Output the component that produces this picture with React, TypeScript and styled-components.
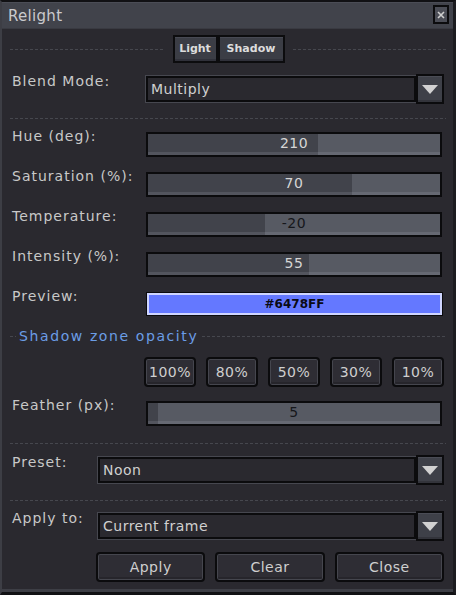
import React from 'react';
import styled, { createGlobalStyle } from 'styled-components';

const GlobalStyle = createGlobalStyle`
  html, body {
    margin: 0;
    padding: 0;
    background: #16161a;
  }
  body {
    font-family: "DejaVu Sans", "Liberation Sans", sans-serif;
  }
`;

const Window = styled.div`
  box-sizing: border-box;
  width: 456px;
  height: 595px;
  display: flex;
  flex-direction: column;
  background: #2a292f;
  border-top: 2px solid #111114;
  border-left: 2px solid #3d3e45;
  border-right: 3px solid #1c1c20;
  border-bottom: 3px solid #111114;
  box-shadow: inset 0 -3px #3d3e45;
  color: #c8c8c8;
  font-size: 14px;
  line-height: 16px;
`;

const TitleBar = styled.div`
  height: 27px;
  flex: none;
  display: flex;
  align-items: center;
  justify-content: space-between;
  padding: 0 4px 0 6px;
  background: #41434b;
  box-shadow: inset 0 1px #4b4d56, inset 0 -1px #393a41;
`;

const Title = styled.span`
  font-size: 15px;
  letter-spacing: 0.3px;
  color: #cacacd;
`;

const CloseButton = styled.div`
  box-sizing: border-box;
  width: 16px;
  height: 19px;
  margin-top: -2px;
  border: 2px solid #0c0c0e;
  background: #4b4d56;
  display: grid;
  place-items: center;
`;

const Body = styled.div`
  flex: 1;
  display: flex;
  flex-direction: column;
  padding: 0 7px 0 8px;
`;

const Row = styled.div<{ $mt: number }>`
  display: flex;
  align-items: flex-start;
  margin-top: ${p => p.$mt}px;
`;

const Label = styled.div<{ $w: number }>`
  flex: none;
  box-sizing: border-box;
  width: ${p => p.$w}px;
  padding-left: 2px;
  letter-spacing: 1px;
  white-space: nowrap;
`;

const Dash = styled.div`
  flex: 1;
  height: 1px;
  background: repeating-linear-gradient(90deg, #46474e 0 3px, transparent 3px 5px);
`;

const Separator = styled.div<{ $mt: number }>`
  height: 1px;
  margin-top: ${p => p.$mt}px;
  background: repeating-linear-gradient(90deg, #46474e 0 3px, transparent 3px 5px);
`;

const TabsRow = styled.div`
  display: flex;
  align-items: center;
  margin-top: 6px;
  height: 28px;
`;

const Tabs = styled.div`
  display: flex;
  margin: 0 8px 0 9px;
`;

const Tab = styled.div<{ $w: number }>`
  box-sizing: border-box;
  width: ${p => p.$w}px;
  height: 28px;
  border: 2px solid #0c0c0e;
  background: #3b3d45;
  box-shadow: inset 0 -2px #30313a, inset 0 1px #474953;
  display: flex;
  align-items: center;
  justify-content: center;
  color: #dcdcdc;
  font-size: 11px;
  font-weight: bold;
`;

const Select = styled.div`
  flex: 1;
  display: flex;
  align-items: center;
  margin: 1px 2px 0 0;
  height: 30px;
`;

const SelectField = styled.div`
  flex: 1;
  box-sizing: border-box;
  height: 26px;
  border: 2px solid #0b0b0d;
  box-shadow: 0 0 0 1px #46474f;
  background: #2a292f;
  display: flex;
  align-items: center;
  padding-left: 3px;
  letter-spacing: 0.5px;
  color: #d0d0d0;
`;

const SelectArrow = styled.div`
  flex: none;
  box-sizing: border-box;
  width: 28px;
  height: 30px;
  border: 2px solid #0b0b0d;
  background: #3e4048;
  box-shadow: inset 0 1px #4a4c55, inset 0 -2px #33343b;
  display: grid;
  place-items: center;
`;

const Track = styled.div`
  position: relative;
  flex: 1;
  height: 25px;
  box-sizing: border-box;
  margin: 4px 4px 0 0;
  border: 2px solid #0b0b0d;
  background: #575a63;
  box-shadow: inset 0 -3px #666973;
`;

const Fill = styled.div`
  height: 100%;
  background: #41434b;
  box-shadow: inset 0 -3px #53555e;
`;

const SliderValue = styled.span<{ $dark: boolean }>`
  position: absolute;
  left: 0;
  right: 0;
  top: 0;
  bottom: 3px;
  display: flex;
  align-items: center;
  justify-content: center;
  letter-spacing: 0.5px;
  color: ${p => (p.$dark ? '#16171b' : '#d6d6d6')};
`;

const Swatch = styled.div<{ $color: string }>`
  flex: 1;
  height: 24px;
  box-sizing: border-box;
  margin: 4px 3px 0 0;
  border: 1px solid #0b0b0d;
  background: ${p => p.$color};
  box-shadow: inset 0 0 0 2px #cfd5ff;
  display: flex;
  align-items: center;
  justify-content: center;
  color: #0a0a14;
  font-size: 12px;
  font-weight: bold;
`;

const SectionHeader = styled.div`
  display: flex;
  align-items: center;
  margin-top: 12px;
  height: 16px;
`;

const SectionDash = styled(Dash)<{ $w?: number }>`
  flex: ${p => (p.$w ? 'none' : '1')};
  width: ${p => (p.$w ? `${p.$w}px` : 'auto')};
`;

const SectionTitle = styled.span`
  margin: 0 4px 0 3px;
  color: #6b9de6;
  letter-spacing: 1.6px;
`;

const ChipRow = styled.div`
  display: flex;
  justify-content: flex-end;
  gap: 10px;
  margin: 13px 2px 0 0;
`;

const PixelButton = styled.div<{ $w?: number }>`
  box-sizing: border-box;
  height: 30px;
  flex: ${p => (p.$w ? 'none' : '1')};
  width: ${p => (p.$w ? `${p.$w}px` : 'auto')};
  border: 2px solid #0b0b0d;
  border-radius: 4px;
  background: #2e2d34;
  box-shadow: inset 0 0 0 1px #45464e, inset 0 -3px #26252b;
  display: flex;
  align-items: center;
  justify-content: center;
  letter-spacing: 0.5px;
  color: #cfcfcf;
`;

const ActionRow = styled.div`
  display: flex;
  gap: 10px;
  margin: 11px 2px 0 86px;
`;

const Arrow = () => (
  <svg width="16" height="9" viewBox="0 0 16 9">
    <polygon points="0,0 16,0 8,9" fill="#d2d2d2" />
  </svg>
);

const Dropdown = ({ value }: { value: string }) => (
  <Select>
    <SelectField>{value}</SelectField>
    <SelectArrow>
      <Arrow />
    </SelectArrow>
  </Select>
);

const Slider = ({ value, frac }: { value: string; frac: number }) => (
  <Track>
    <Fill style={{ width: `${frac * 100}%` }} />
    <SliderValue $dark={frac < 0.5}>{value}</SliderValue>
  </Track>
);

const sliders = [
  { label: 'Hue (deg):', value: '210', frac: 210 / 360, mt: 9 },
  { label: 'Saturation (%):', value: '70', frac: 0.7, mt: 11 },
  { label: 'Temperature:', value: '-20', frac: 0.4, mt: 11 },
  { label: 'Intensity (%):', value: '55', frac: 0.55, mt: 11 },
];

const opacities = ['100%', '80%', '50%', '30%', '10%'];

const App = () => (
  <>
    <GlobalStyle />
    <Window>
      <TitleBar>
        <Title>Relight</Title>
        <CloseButton>
          <svg width="8" height="8" viewBox="0 0 8 8">
            <path d="M1 1 L7 7 M7 1 L1 7" stroke="#d0d0d0" strokeWidth="1.6" />
          </svg>
        </CloseButton>
      </TitleBar>
      <Body>
        <TabsRow>
          <Dash />
          <Tabs>
            <Tab $w={45}>Light</Tab>
            <Tab $w={67}>Shadow</Tab>
          </Tabs>
          <Dash />
        </TabsRow>

        <Row $mt={10}>
          <Label $w={136}>Blend Mode:</Label>
          <Dropdown value="Multiply" />
        </Row>

        <Separator $mt={14} />

        {sliders.map(s => (
          <Row key={s.label} $mt={s.mt}>
            <Label $w={136}>{s.label}</Label>
            <Slider value={s.value} frac={s.frac} />
          </Row>
        ))}

        <Row $mt={11}>
          <Label $w={136}>Preview:</Label>
          <Swatch $color="#6478ff">#6478FF</Swatch>
        </Row>

        <SectionHeader>
          <SectionDash $w={6} />
          <SectionTitle>Shadow zone opacity</SectionTitle>
          <SectionDash />
        </SectionHeader>

        <ChipRow>
          {opacities.map(o => (
            <PixelButton key={o} $w={52}>{o}</PixelButton>
          ))}
        </ChipRow>

        <Row $mt={10}>
          <Label $w={136}>Feather (px):</Label>
          <Slider value="5" frac={0.034} />
        </Row>

        <Separator $mt={17} />

        <Row $mt={10}>
          <Label $w={88}>Preset:</Label>
          <Dropdown value="Noon" />
        </Row>

        <Separator $mt={15} />

        <Row $mt={9}>
          <Label $w={88}>Apply to:</Label>
          <Dropdown value="Current frame" />
        </Row>

        <ActionRow>
          <PixelButton>Apply</PixelButton>
          <PixelButton>Clear</PixelButton>
          <PixelButton>Close</PixelButton>
        </ActionRow>
      </Body>
    </Window>
  </>
);

export default App;
